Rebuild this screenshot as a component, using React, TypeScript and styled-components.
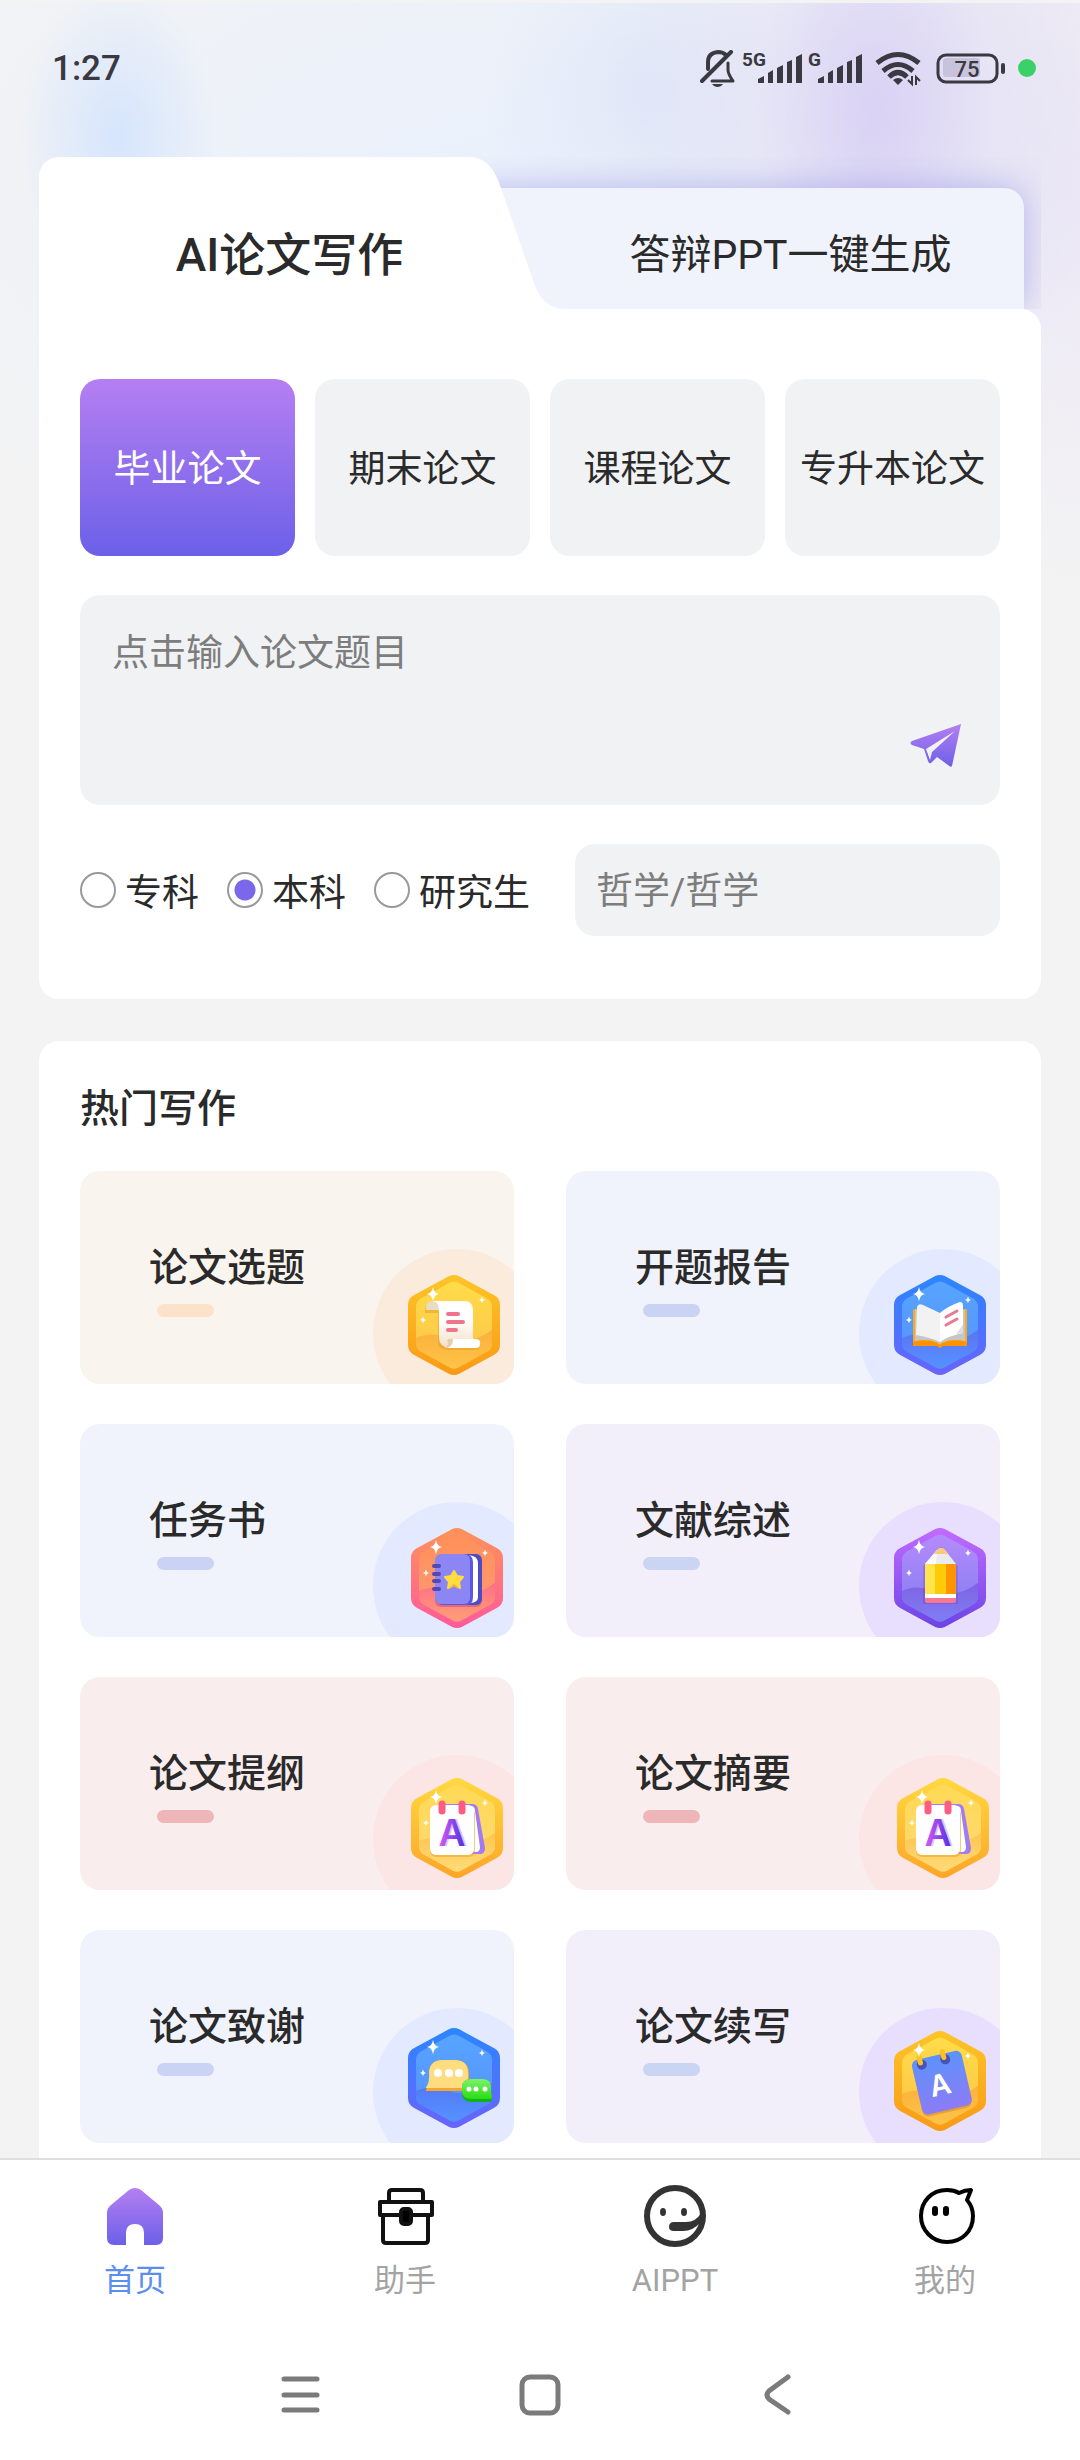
import React, { useState } from 'react';
import styled, { createGlobalStyle } from 'styled-components';

const categories = ['毕业论文', '期末论文', '课程论文', '专升本论文'];
const degrees = ['专科', '本科', '研究生'];

const tones = {
  cream: { bg: '#f9f4ee', bar: '#fce2c9', circle: '#faebdd' },
  blue: { bg: '#f0f3fb', bar: '#cad3f3', circle: '#e3e9fe' },
  purple: { bg: '#f2eefa', bar: '#cad4f3', circle: '#e8defd' },
  pink: { bg: '#f9eded', bar: '#eeb6b8', circle: '#fbe5e5' },
};

type Tone = keyof typeof tones;

interface ICard {
  title: string;
  tone: Tone;
  icon: string;
  cx: number;
  cy: number;
}

const cards: ICard[] = [
  { title: '论文选题', tone: 'cream', icon: 'scroll', cx: 81, cy: 76 },
  { title: '开题报告', tone: 'blue', icon: 'book', cx: 81, cy: 76 },
  { title: '任务书', tone: 'blue', icon: 'notebook', cx: 84, cy: 76 },
  { title: '文献综述', tone: 'purple', icon: 'pencil', cx: 81, cy: 76 },
  { title: '论文提纲', tone: 'pink', icon: 'calendar', cx: 84, cy: 73 },
  { title: '论文摘要', tone: 'pink', icon: 'calendar', cx: 84, cy: 73 },
  { title: '论文致谢', tone: 'blue', icon: 'chat', cx: 81, cy: 70 },
  { title: '论文续写', tone: 'purple', icon: 'note', cx: 81, cy: 73 },
];

// outer top, outer bottom, inner top, inner bottom, wave
const hexColors: Record<string, string[]> = {
  scroll: ['#fdc527', '#f99a17', '#ffdc4a', '#fdc246', '#fbb13c'],
  book: ['#2a86ff', '#6a63ff', '#57a4ff', '#5590ff', '#5b74f3'],
  notebook: ['#ff9358', '#ff5a9c', '#ff9058', '#ff9b78', '#ff6f86'],
  pencil: ['#c26bff', '#6a45e6', '#b48bfb', '#7f7cf2', '#7f62e4'],
  calendar: ['#ffd93f', '#fda528', '#ffd955', '#ffd974', '#fdc552'],
  chat: ['#2a86ff', '#6a63ff', '#57a4ff', '#5590ff', '#5277f5'],
  note: ['#fdc527', '#f99a17', '#ffdc4a', '#fdc246', '#fbb13c'],
};

const Sparkle = ({ x, y, r }: { x: number; y: number; r: number }) => (
  <path
    transform={`translate(${x} ${y}) scale(${r})`}
    d="M0 -1.2Q.15 -.15 1 0Q.15 .15 0 1.2Q-.15 .15 -1 0Q-.15 -.15 0 -1.2Z"
    fill="#fff"
  />
);

const Glyph = ({ icon }: { icon: string }) => {
  switch (icon) {
    case 'scroll':
      return (
        <>
          <path d="M-28 -14Q-29 -24 -20 -24H12Q19 -23 19 -15V14H25Q28 18 25 23H-7Q-15 22 -15 14V-14Z" fill="#e39a1c" opacity=".5" transform="translate(-1 2)" />
          <path d="M-21 -24H12Q19 -23 19 -15V14L-4 23Q-15 22 -15 13V-14Z" fill="url(#paper)" />
          <path d="M-28 -15Q-29 -24 -21 -24Q-15 -23 -15 -15Z" fill="#e9dcc5" />
          <path d="M-10 23Q0 23 -1 14H23Q27 15 26 19Q26 23 22 23Z" fill="#fff" />
          <path d="M-10 23Q-2 23 -1 14Q-4 13 -7 15Q-4 20 -10 23Z" fill="#e6cdb0" />
          <path d="M-6 -11H4M-6 -3H9M-6 5H2" stroke="#f0748c" strokeWidth="4" strokeLinecap="round" />
        </>
      );
    case 'book':
      return (
        <>
          <path d="M-27 -16L0 -8L27 -16V20H3L0 23L-3 20H-27Z" fill="#ffab0a" />
          <path d="M-25 -16L0 -8L25 -16V16Q8 13 0 19Q-8 13 -25 16Z" fill="#c5c6c9" />
          <path d="M-27 17Q-10 13 0 20Q10 13 27 17V21H3L0 23L-3 21H-27Z" fill="#ff9200" />
          <path d="M-23 -18Q-22 -22 -17 -20L0 -12V17Q-8 13 -24 10Z" fill="#f2f2f3" />
          <path d="M0 -12Q8 -19 20 -23Q23 -23 23 -19V8Q8 11 0 17Z" fill="#fff" />
          <path d="M23 -1Q19 6 16 9L23 8Z" fill="#dddde0" />
          <path d="M6 -8L17 -14M6 0L17 -6" stroke="#e87a8d" strokeWidth="3" strokeLinecap="round" />
        </>
      );
    case 'notebook':
      return (
        <>
          <rect x="-22" y="-21" width="47" height="50" rx="6" fill="#c34a6c" opacity=".5" />
          <rect x="-20" y="-24" width="45" height="51" rx="6" fill="#4f49c4" />
          <path d="M12 -23Q21 -22 21 -15V19Q21 25 12 25Z" fill="#fff" />
          <path d="M-16 -24H10Q16 -22 16 -16V19Q16 27 9 27H-15Z" fill="#5d57e6" />
          <rect x="-22" y="-24" width="35" height="50" rx="6" fill="#8b86f3" />
          <path d="M-23 -12H-18M-23 -4H-18M-23 3H-18M-23 11H-18" stroke="#5548b4" strokeWidth="4" strokeLinecap="round" />
          <path d="M-3 -7L0 -2L6 -1L2 4L3 10L-3 7L-9 10L-8 4L-12 -1L-6 -2Z" fill="#ffdc3f" stroke="#ffdc3f" strokeWidth="2" strokeLinejoin="round" />
          <path d="M-8 10L-3 6L2 10L-3 8Z" fill="#f9a72e" />
        </>
      );
    case 'pencil':
      return (
        <>
          <path d="M-17 -12L1 -31L18 -12V26H-17Z" fill="#4b2fb5" opacity=".2" />
          <path d="M-15 -14L-3 -28Q1 -32 5 -28L16 -14V-13H-15Z" fill="#e9ebee" />
          <path d="M-15 -14L-3 -28L-4 -13H-15Z" fill="#fafafa" />
          <path d="M-6 -24L-3 -28Q1 -32 5 -28L8 -24Z" fill="#ffc978" />
          <path d="M-15 -14H-4V16H-15Z" fill="#ffe54b" />
          <path d="M-5 -14H7V16H-5Z" fill="#ffca08" />
          <path d="M6 -14H16V16H6Z" fill="#ff9503" />
          <path d="M-15 16H16V20H-15Z" fill="#fff" />
          <path d="M-15 20H16V23Q16 25 14 25H-13Q-15 25 -15 23Z" fill="#fb7790" />
        </>
      );
    case 'calendar':
      return (
        <>
          <path d="M-12 -24H15Q20 -24 21 -19L28 20Q28 26 23 26H12Z" fill="#a07bf6" />
          <path d="M4 -22H15Q18 -21 18 -17L23 19Q23 24 19 24H8Z" fill="#fff" />
          <rect x="-27" y="-20" width="45" height="49" rx="6" fill="#f2a62b" opacity=".6" />
          <rect x="-27" y="-23" width="44" height="50" rx="6" fill="#fff" />
          <path d="M-15 -24V-17M5 -24V-17" stroke="#ff5c84" strokeWidth="7" strokeLinecap="round" />
          <text x="-3" y="18" fontSize="37" fill="#d9c9fb" aria-hidden="true">A</text>
          <text x="-5" y="18" fontSize="37" fill="url(#letter)">A</text>
        </>
      );
    case 'chat':
      return (
        <>
          <path d="M-28 12Q-24 8 -25 -5Q-24 -18 -11 -18H2Q15 -17 15 -4V5Q14 13 6 13H-26Q-29 14 -28 10Z" fill="#f8a430" />
          <path d="M-28 9Q-24 5 -25 -6Q-24 -18 -11 -18H2Q14 -17 14 -5V2Q13 10 6 10H-26Q-28 11 -28 9Z" fill="#ffdc7e" />
          <circle cx="-16" cy="-5" r="4" fill="#fff" />
          <circle cx="-5" cy="-5" r="4" fill="#fff" />
          <circle cx="5" cy="-5" r="4" fill="#fff" />
          <path d="M8 9Q9 1 17 1H29Q37 2 37 9V17L38 22Q38 24 35 24H16Q8 23 8 15Z" fill="#0db41e" />
          <path d="M8 8Q9 1 17 1H29Q37 2 37 8V15L38 19Q38 21 35 21H16Q8 20 8 13Z" fill="url(#green)" />
          <circle cx="15" cy="11" r="2.5" fill="#fff" />
          <circle cx="22" cy="11" r="2.5" fill="#fff" />
          <circle cx="31" cy="11" r="2.5" fill="#fff" />
        </>
      );
    default:
      return (
        <g transform="rotate(-13)">
          <rect x="-24" y="-24" width="50" height="56" rx="6" fill="#e08a1c" opacity=".6" />
          <rect x="-24" y="-26" width="51" height="56" rx="6" fill="url(#noteBlue)" />
          <circle cx="-14" cy="-20" r="5" fill="#4a52b8" />
          <circle cx="10" cy="-20" r="5" fill="#4a52b8" />
          <path d="M-15 -28V-22M9 -28V-22" stroke="#ffc21c" strokeWidth="5" strokeLinecap="round" />
          <text x="-1" y="14" fontSize="29" fill="#fff">A</text>
        </g>
      );
  }
};

const Badge = ({ card, id }: { card: ICard; id: string }) => {
  const c = hexColors[card.icon];
  return (
    <BadgeSvg viewBox="0 0 141 135" aria-hidden="true">
      <defs>
        <linearGradient id={`${id}o`} gradientUnits="userSpaceOnUse" x1="0" y1="-50" x2="0" y2="50">
          <stop offset="0" stopColor={c[0]} />
          <stop offset="1" stopColor={c[1]} />
        </linearGradient>
        <linearGradient id={`${id}i`} gradientUnits="userSpaceOnUse" x1="0" y1="-43" x2="0" y2="43">
          <stop offset="0" stopColor={c[2]} />
          <stop offset="1" stopColor={c[3]} />
        </linearGradient>
        <linearGradient id={`${id}w`} gradientUnits="userSpaceOnUse" x1="0" y1="5" x2="0" y2="40">
          <stop offset="0" stopColor={c[4]} />
          <stop offset="1" stopColor={c[3]} />
        </linearGradient>
        <clipPath id={`${id}c`}>
          <path d="M-5 -42Q0 -45 5 -42L34 -26Q38 -23 38 -18V18Q38 23 34 26L5 42Q0 45 -5 42L-34 26Q-38 23 -38 18V-18Q-38 -23 -34 -26Z" />
        </clipPath>
      </defs>
      <circle cx="84" cy="84" r="84" fill={tones[card.tone].circle} />
      <g transform={`translate(${card.cx} ${card.cy})`}>
        <path
          d="M0 -39L35 -20V20L0 39L-35 20V-20Z"
          fill={`url(#${id}o)`}
          stroke={`url(#${id}o)`}
          strokeWidth="22"
          strokeLinejoin="round"
        />
        <g clipPath={`url(#${id}c)`}>
          <path d="M-46 -50H46V50H-46Z" fill={`url(#${id}i)`} />
          <path d="M-40 14Q-26 6 -8 12Q18 22 40 3V50H-40Z" fill={`url(#${id}w)`} />
        </g>
        <Glyph icon={card.icon} />
        <Sparkle x={-21} y={-31} r={6} />
        <Sparkle x={28} y={-25} r={3} />
        {card.icon !== 'note' && <Sparkle x={-31} y={-5} r={3} />}
      </g>
    </BadgeSvg>
  );
};

const SharedDefs = () => (
  <HiddenSvg aria-hidden="true">
    <defs>
      <linearGradient id="brand" x1="0" y1="0" x2="0" y2="1">
        <stop offset="0" stopColor="#b57ff2" />
        <stop offset="1" stopColor="#6c60e8" />
      </linearGradient>
      <linearGradient id="paper" x1="0" y1="0" x2="0" y2="1">
        <stop offset=".4" stopColor="#fff" />
        <stop offset="1" stopColor="#f3dfc4" />
      </linearGradient>
      <linearGradient id="letter" x1="0" y1="0" x2="1" y2="0">
        <stop offset="0" stopColor="#d85cf0" />
        <stop offset="1" stopColor="#4f2fe8" />
      </linearGradient>
      <linearGradient id="green" x1="0" y1="0" x2="0" y2="1">
        <stop offset="0" stopColor="#7df36b" />
        <stop offset="1" stopColor="#2bdc12" />
      </linearGradient>
      <linearGradient id="noteBlue" x1="0" y1="0" x2="0" y2="1">
        <stop offset="0" stopColor="#5c93fb" />
        <stop offset="1" stopColor="#8d7bf6" />
      </linearGradient>
    </defs>
  </HiddenSvg>
);

const Signal = ({ label, start }: { label: string; start: number }) => (
  <svg width="66" height="46" viewBox="-4 -6 66 46" fill="#3a3840">
    <text x="-1" y="16" fontSize="19" fontWeight="700">{label}</text>
    <g transform={`translate(${start} 0)`}>
      <path d="M0 29L6 26V33H0Z" />
      <path d="M10 23L15 20V33H10Z" />
      <path d="M19 18L25 15V33H19Z" />
      <path d="M29 12L34 10V33H29Z" />
      <path d="M38 7L44 4V33H38Z" />
    </g>
  </svg>
);

const StatusIcons = () => (
  <Icons role="img" aria-label="status">
    <svg width="39" height="40" viewBox="0 0 39 40" fill="none" stroke="#3a3840" strokeWidth="4" strokeLinecap="round">
      <path d="M31 2L2 31" />
      <path d="M8 19V12Q8 3 18 2Q23 2 26 5" />
      <path d="M28 13V20Q28 24 33 31H12" strokeWidth="3" strokeLinejoin="round" />
      <path d="M12 34H23Q21 37 17 37Q14 37 12 34Z" fill="#3a3840" stroke="none" />
    </svg>
    <Signal label="5G" start={15} />
    <Signal label="G" start={9} />
    <svg width="65" height="40" viewBox="-4 0 65 40" fill="none" stroke="#3a3840" strokeWidth="5">
      <path d="M2 13Q23 -4 44 13" />
      <path d="M8 21Q23 8 38 21" />
      <path d="M14 27Q23 18 32 27" />
      <path d="M18 30Q23 26 28 30L23 35Z" fill="#3a3840" stroke="none" />
      <path d="M33 30L37 34V26M41 35V27L45 31" strokeWidth="2" />
    </svg>
    <svg width="82" height="40" viewBox="0 0 82 40">
      <rect x="7" y="8" width="37" height="19" rx="3" fill="#c8c3dc" />
      <rect x="2" y="5" width="59" height="27" rx="8" fill="none" stroke="#3a3840" strokeWidth="3" />
      <rect x="65" y="13" width="4" height="11" rx="2" fill="#3a3840" />
      <text x="31" y="27" fontSize="22" fontWeight="500" textAnchor="middle" fill="#3a3840">75</text>
    </svg>
    <svg width="18" height="40" viewBox="0 0 18 40">
      <circle cx="9" cy="18" r="9" fill="#3ad169" />
    </svg>
  </Icons>
);

const tabs = [
  {
    label: '首页',
    icon: (
      <path d="M26 5Q32 1 38 5L56 20Q60 23 60 28V53Q60 60 53 60H41V48Q41 39 32 39Q23 39 23 48V60H11Q4 60 4 53V28Q4 23 8 20Z" fill="url(#brand)" />
    ),
  },
  {
    label: '助手',
    icon: (
      <g fill="none" stroke="#111" strokeWidth="4" strokeLinejoin="round">
        <path d="M16 17V8Q16 5 19 5H47Q50 5 50 8V17" />
        <path d="M7 17H59V30H7Z" />
        <path d="M10 30V55Q10 58 13 58H52Q55 58 55 55V30" />
        <rect x="28" y="24" width="10" height="15" rx="3" fill="#000" />
      </g>
    ),
  },
  {
    label: 'AIPPT',
    icon: (
      <g fill="none" stroke="#333" strokeWidth="6">
        <circle cx="32" cy="31" r="28" />
        <ellipse cx="20" cy="27" rx="3" ry="4" fill="#333" stroke="none" />
        <ellipse cx="41" cy="27" rx="3" ry="4" fill="#333" stroke="none" />
        <path d="M58 28Q53 37 43 37H31Q26 37 26 42Q26 46 31 46H40Q50 46 58 37Z" fill="#333" stroke="none" />
      </g>
    ),
  },
  {
    label: '我的',
    icon: (
      <g fill="none" stroke="#000" strokeWidth="4" strokeLinejoin="round" strokeLinecap="round">
        <path d="M46 8Q41 5 34 5C18 5 8 17 8 31S19 57 34 57S60 46 60 31Q60 22 54 15Q56 10 58 5Q52 5 46 8" />
        <path d="M22 24V28M33 24V28" strokeWidth="6" />
      </g>
    ),
  },
];

const App = () => {
  const [category, setCategory] = useState(0);
  const [degree, setDegree] = useState('本科');
  const [title, setTitle] = useState('');
  const [subject, setSubject] = useState('');

  return (
    <Page>
      <GlobalStyle />
      <SharedDefs />
      <Scroll>
        <StatusBar>
          <Clock>1:27</Clock>
          <StatusIcons />
        </StatusBar>

        <Modes>
          <ActiveMode type="button">
            <ModeFill />
            <ModeEdge viewBox="0 0 97 152" aria-hidden="true">
              <path d="M0 0C20 0 28 15 33 31L66 126C72 143 82 152 97 152H0Z" fill="#fff" />
            </ModeEdge>
            <span>AI论文写作</span>
          </ActiveMode>
          <OtherMode type="button">
            <span>答辩PPT一键生成</span>
          </OtherMode>
        </Modes>

        <WriteCard>
          <Categories>
            {categories.map((name, i) => (
              <Category key={name} type="button" $active={i === category} onClick={() => setCategory(i)}>
                {name}
              </Category>
            ))}
          </Categories>
          <TopicBox>
            <Topic
              aria-label="论文题目"
              placeholder="点击输入论文题目"
              value={title}
              onChange={(e) => setTitle(e.target.value)}
            />
            <Send type="button" aria-label="发送">
              <svg width="52" height="43" viewBox="0 0 52 43">
                <path d="M51 0L42 42Q41 44 38 41L27 33L21 39Q19 40 18 37L14 25L2 21Q-1 19 2 17Z" fill="url(#brand)" />
                <path d="M45 7L16 25L20 36L22 28Z" fill="#f1f2f4" />
              </svg>
            </Send>
          </TopicBox>
          <Options>
            <Degrees>
              {degrees.map((name) => (
                <Degree key={name}>
                  <input
                    type="radio"
                    name="degree"
                    checked={degree === name}
                    onChange={() => setDegree(name)}
                  />
                  {name}
                </Degree>
              ))}
            </Degrees>
            <Subject
              aria-label="专业"
              placeholder="哲学/哲学"
              value={subject}
              onChange={(e) => setSubject(e.target.value)}
            />
          </Options>
        </WriteCard>

        <HotCard>
          <h2>热门写作</h2>
          <Grid>
            {cards.map((card, i) => (
              <Entry key={card.title} href="#" $tone={card.tone}>
                <span>{card.title}</span>
                <Bar $tone={card.tone} />
                <Badge card={card} id={`hex${i}`} />
              </Entry>
            ))}
          </Grid>
        </HotCard>
      </Scroll>

      <TabBar>
        {tabs.map((tab, i) => (
          <Tab key={tab.label} href="#" $active={i === 0}>
            <svg width="64" height="64" viewBox="0 0 64 64" aria-hidden="true">{tab.icon}</svg>
            {tab.label}
          </Tab>
        ))}
      </TabBar>
      <SystemBar>
        <button type="button" aria-label="菜单">
          <svg width="44" height="44" viewBox="0 0 44 44">
            <path d="M5 6H38M5 22H38M5 37H38" />
          </svg>
        </button>
        <button type="button" aria-label="主页">
          <svg width="44" height="44" viewBox="0 0 44 44">
            <rect x="4" y="4" width="36" height="36" rx="8" />
          </svg>
        </button>
        <button type="button" aria-label="返回">
          <svg width="44" height="44" viewBox="0 0 44 44">
            <path d="M31 4L12 18Q8 22 12 26L31 39" />
          </svg>
        </button>
      </SystemBar>
    </Page>
  );
};

export default App;

const GlobalStyle = createGlobalStyle`
  * {
    box-sizing: border-box;
  }
  body {
    margin: 0;
    color: #2a2a2a;
    background: #f3f3f3;
    font-family: Roboto, 'Noto Sans CJK SC', sans-serif;
  }
  button, input, textarea {
    font: inherit;
    color: inherit;
    border: none;
    outline: none;
    background: none;
    padding: 0;
  }
  a {
    color: inherit;
    text-decoration: none;
  }
  svg {
    display: block;
  }
`;

const Page = styled.div`
  display: flex;
  flex-direction: column;
  height: 100vh;
`;

const HiddenSvg = styled.svg`
  position: absolute;
  width: 0;
  height: 0;
`;

const Scroll = styled.main`
  flex: 1;
  min-height: 0;
  overflow-y: auto;
  scrollbar-width: none;
  padding: 0 39px;
  background:
    linear-gradient(#f3f3f3, #f3f3f3) 0 0 / 100% 3px no-repeat,
    radial-gradient(100px 150px at 118px 136px, rgba(200, 222, 255, 0.65), transparent),
    radial-gradient(120px 240px at 874px 120px, rgba(208, 196, 244, 0.5), transparent),
    radial-gradient(280px 300px at 880px 100px, rgba(214, 206, 242, 0.5), transparent),
    radial-gradient(160px 180px at 640px 90px, rgba(220, 228, 248, 0.7), transparent),
    radial-gradient(700px 420px at 480px 180px, rgba(232, 240, 254, 0.8), transparent),
    radial-gradient(260px 400px at 1080px 200px, rgba(236, 230, 246, 0.8), transparent),
    #f3f3f3;
`;

const StatusBar = styled.header`
  display: flex;
  justify-content: space-between;
  height: 157px;
  padding: 44px 5px 0 13px;
`;

const Clock = styled.span`
  font-size: 35px;
  line-height: 50px;
  font-weight: 500;
  color: #3a3840;
`;

const Icons = styled.div`
  display: flex;
  align-items: flex-end;
  height: 46px;
`;

const Modes = styled.div`
  display: flex;
  height: 152px;
  overflow: hidden;
`;

const Mode = styled.button`
  position: relative;
  flex: 1;
  padding-top: 36px;
  span {
    position: relative;
  }
`;

const ActiveMode = styled(Mode)`
  z-index: 1;
  font-size: 46px;
  font-weight: 500;
`;

const OtherMode = styled(Mode)`
  font-size: 41px;
  &::before {
    content: '';
    position: absolute;
    top: 31px;
    left: -80px;
    right: 17px;
    bottom: 0;
    border-radius: 0 20px 0 0;
    background: #f0f3fb;
    box-shadow: 0 0 32px rgba(130, 130, 225, 0.5);
  }
`;

const ModeFill = styled.i`
  position: absolute;
  top: 0;
  left: 0;
  right: 71px;
  bottom: 0;
  border-radius: 20px 0 0 0;
  background: #fff;
`;

const ModeEdge = styled.svg`
  position: absolute;
  top: 0;
  right: -25px;
  width: 97px;
  height: 152px;
`;

const WriteCard = styled.section`
  display: flex;
  flex-direction: column;
  gap: 39px;
  padding: 70px 41px 63px;
  border-radius: 0 20px 20px 20px;
  background: #fff;
  font-size: 37px;
`;

const Categories = styled.div`
  display: grid;
  grid-template-columns: repeat(4, 1fr);
  gap: 20px;
`;

const Category = styled.button<{ $active: boolean }>`
  height: 177px;
  padding-bottom: 3px;
  border-radius: 20px;
  white-space: nowrap;
  color: ${(p) => (p.$active ? '#fff' : '#2a2a2a')};
  background: ${(p) => (p.$active ? 'linear-gradient(#b57ff2, #6c60e8)' : '#f1f2f4')};
`;

const TopicBox = styled.div`
  display: flex;
  flex-direction: column;
  height: 210px;
  padding: 32px 38px 38px 32px;
  border-radius: 20px;
  background: #f1f2f4;
`;

const Topic = styled.textarea`
  flex: 1;
  min-height: 0;
  resize: none;
  line-height: 54px;
  &::placeholder {
    color: #7d7d7d;
  }
`;

const Send = styled.button`
  align-self: flex-end;
`;

const Options = styled.div`
  display: flex;
  align-items: center;
  justify-content: space-between;
`;

const Degrees = styled.div`
  display: flex;
  gap: 28px;
`;

const Degree = styled.label`
  display: flex;
  align-items: center;
  gap: 9px;
  white-space: nowrap;
  input {
    appearance: none;
    width: 36px;
    height: 36px;
    margin: 0;
    border: 2px solid #999;
    border-radius: 50%;
  }
  input:checked {
    background: radial-gradient(circle, #7a67e9 10px, #fff 11px);
  }
`;

const Subject = styled.input`
  width: 425px;
  height: 92px;
  padding: 2px 21px 0;
  border-radius: 20px;
  background: #f1f2f4;
  &::placeholder {
    color: #7d7d7d;
  }
`;

const HotCard = styled.section`
  margin-top: 42px;
  padding: 41px 41px 40px;
  border-radius: 20px;
  background: #fff;
  h2 {
    margin: 0 0 35px;
    font-size: 39px;
    line-height: 54px;
    font-weight: 500;
  }
`;

const Grid = styled.div`
  display: grid;
  grid-template-columns: 1fr 1fr;
  gap: 40px 52px;
`;

const Entry = styled.a<{ $tone: Tone }>`
  position: relative;
  overflow: hidden;
  height: 213px;
  padding: 69px 0 0 69px;
  border-radius: 20px;
  background: ${(p) => tones[p.$tone].bg};
  font-size: 39px;
  line-height: 56px;
  font-weight: 500;
`;

const Bar = styled.div<{ $tone: Tone }>`
  width: 57px;
  height: 13px;
  margin: 8px 0 0 8px;
  border-radius: 7px;
  background: ${(p) => tones[p.$tone].bar};
`;

const BadgeSvg = styled.svg`
  position: absolute;
  right: 0;
  bottom: 0;
  width: 141px;
  height: 135px;
  text {
    font-family: Inter, sans-serif;
    font-weight: 600;
    text-anchor: middle;
  }
`;

const TabBar = styled.nav`
  display: flex;
  height: 172px;
  padding-top: 25px;
  border-top: 2px solid #dedede;
  background: #fff;
`;

const Tab = styled.a<{ $active: boolean }>`
  flex: 1;
  display: flex;
  flex-direction: column;
  align-items: center;
  gap: 10px;
  font-size: 31px;
  line-height: 44px;
  color: ${(p) => (p.$active ? '#5a8ef0' : '#a3a3a3')};
`;

const SystemBar = styled.div`
  display: flex;
  justify-content: center;
  gap: 195px;
  height: 130px;
  padding-top: 43px;
  background: #fff;
  button {
    height: 44px;
  }
  svg {
    fill: none;
    stroke: #7b7b7b;
    stroke-width: 5;
    stroke-linecap: round;
  }
`;
